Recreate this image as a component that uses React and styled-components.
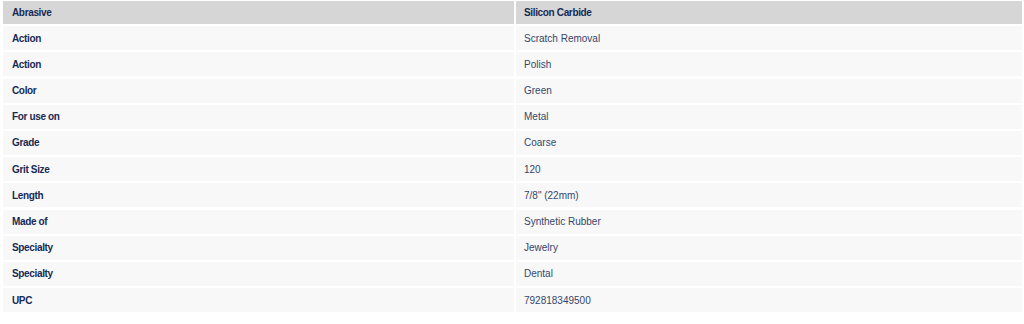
import React from 'react';
import styled, { createGlobalStyle } from 'styled-components';

const GlobalStyle = createGlobalStyle`
  body {
    margin: 0;
    background: #ffffff;
    font-family: "Liberation Sans", Arial, sans-serif;
  }
`;

const Wrapper = styled.div`
  padding: 1px 2px 0 3px;
`;

const Table = styled.div`
  display: grid;
  grid-template-columns: 511px 1fr;
  grid-auto-rows: 24px;
  grid-template-rows: 23px;
  column-gap: 2px;
  row-gap: 2.2px;
`;

const Cell = styled.div`
  display: flex;
  align-items: center;
  padding-left: ${props => props.right ? "8px" : "9px"};
  background: ${props => props.head ? "#d6d6d6" : "#f8f8f8"};
  color: ${props => props.right && !props.head ? "#34466b" : "#172a55"};
  font-size: 10px;
  font-weight: ${props => props.right && !props.head ? 400 : 700};
  letter-spacing: ${props => props.right && !props.head ? "0" : "-0.35px"};
  white-space: nowrap;
`;

const specs = [
  ["Action", "Scratch Removal"],
  ["Action", "Polish"],
  ["Color", "Green"],
  ["For use on", "Metal"],
  ["Grade", "Coarse"],
  ["Grit Size", "120"],
  ["Length", "7/8\" (22mm)"],
  ["Made of", "Synthetic Rubber"],
  ["Specialty", "Jewelry"],
  ["Specialty", "Dental"],
  ["UPC", "792818349500"],
];

class App extends React.Component {
  render() {
    return <>
      <GlobalStyle />
      <Wrapper>
        <Table>
          <Cell head>Abrasive</Cell>
          <Cell head right>Silicon Carbide</Cell>
          {specs.map(([name, value], i) => (
            <React.Fragment key={i}>
              <Cell>{name}</Cell>
              <Cell right>{value}</Cell>
            </React.Fragment>
          ))}
        </Table>
      </Wrapper>
    </>
  }
}

export default App;
